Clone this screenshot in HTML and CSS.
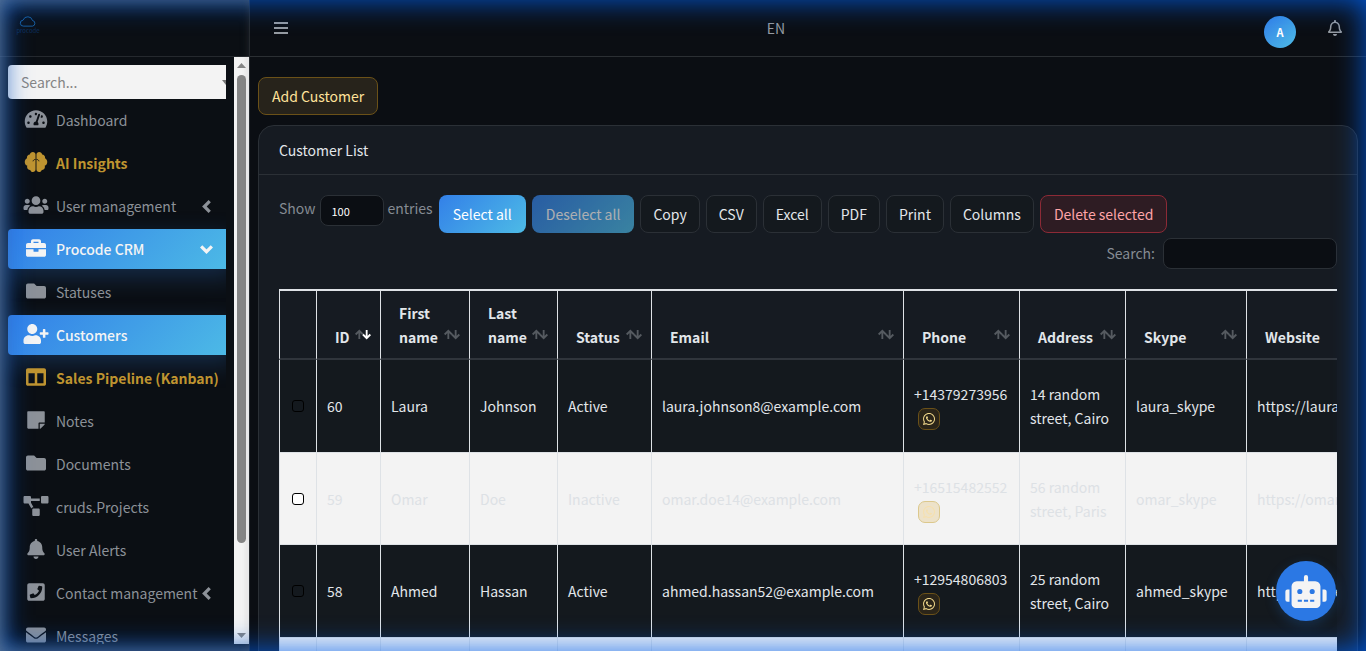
FILE: index.html
```
<!DOCTYPE html>
<html lang="en">
<head>
  <meta charset="utf-8">
  <title>Customer List</title>
  <link rel="stylesheet" href="styles.css">
</head>
<body>
<!-- icon sprite -->
<svg class="sprite">
  <symbol id="i-dash" viewBox="0 0 576 512"><path d="M288 32C128.94 32 0 160.94 0 320c0 52.8 14.25 102.26 39.06 144.8 5.61 9.62 16.3 15.2 27.44 15.2h443c11.14 0 21.83-5.58 27.44-15.2C561.75 422.26 576 372.8 576 320c0-159.06-128.94-288-288-288zm0 64c14.71 0 26.58 10.13 30.32 23.65-1.11 2.26-2.64 4.23-3.45 6.67l-9.22 27.67c-5.13 3.49-10.97 6.01-17.64 6.01-17.67 0-32-14.33-32-32S270.33 96 288 96zM96 384c-17.67 0-32-14.33-32-32s14.33-32 32-32 32 14.33 32 32-14.33 32-32 32zm48-160c-17.67 0-32-14.33-32-32s14.33-32 32-32 32 14.33 32 32-14.33 32-32 32zm246.77-72.41l-61.33 184C343.13 347.33 352 364.54 352 384c0 11.72-3.38 22.55-8.88 32H232.88c-5.5-9.45-8.88-20.28-8.88-32 0-33.94 26.5-61.43 59.9-63.59l61.34-184.01c4.17-12.56 17.73-19.45 30.36-15.17 12.57 4.19 19.35 17.79 15.17 30.36zm14.66 57.2l15.52-46.55c3.47-1.29 7.13-2.23 11.05-2.23 17.67 0 32 14.33 32 32s-14.33 32-32 32c-11.38-.01-20.89-6.28-26.57-15.22zM480 384c-17.67 0-32-14.33-32-32s14.33-32 32-32 32 14.33 32 32-14.33 32-32 32z"/></symbol>
  <symbol id="i-brain" viewBox="0 0 576 512"><path d="M208 0c38 0 68 26 68 62v388c0 34-28 62-66 62-36 0-62-22-70-54-46 2-80-32-80-76 0-10 2-20 6-28C26 340 0 302 0 256c0-42 24-78 60-94-2-8-4-14-4-22 0-40 32-72 74-76C136 26 168 0 208 0zM368 0c-38 0-68 26-68 62v388c0 34 28 62 66 62 36 0 62-22 70-54 46 2 80-32 80-76 0-10-2-20-6-28 40-14 66-52 66-98 0-42-24-78-60-94 2-8 4-14 4-22 0-40-32-72-74-76C440 26 408 0 368 0z"/><path class="cut" d="M276 190c-34 0-58 18-64 48M300 190c34 0 58 18 64 48"/></symbol>
  <symbol id="i-users" viewBox="0 0 640 512"><path d="M96 224c35.3 0 64-28.7 64-64s-28.7-64-64-64-64 28.7-64 64 28.7 64 64 64zm448 0c35.3 0 64-28.7 64-64s-28.7-64-64-64-64 28.7-64 64 28.7 64 64 64zm32 32h-64c-17.6 0-33.5 7.1-45.1 18.6 40.3 22.1 68.9 62 75.1 109.4h66c17.7 0 32-14.3 32-32v-32c0-35.3-28.7-64-64-64zm-256 0c61.9 0 112-50.1 112-112S381.9 32 320 32 208 82.1 208 144s50.1 112 112 112zm76.8 32h-8.3c-20.8 10-43.9 16-68.5 16s-47.6-6-68.5-16h-8.3C179.6 288 128 339.6 128 403.2V432c0 26.5 21.5 48 48 48h288c26.5 0 48-21.5 48-48v-28.8c0-63.6-51.6-115.2-115.2-115.2zm-223.7-13.4C161.5 263.1 145.6 256 128 256H64c-35.3 0-64 28.7-64 64v32c0 17.7 14.3 32 32 32h65.9c6.3-47.4 34.9-87.3 75.2-109.4z"/></symbol>
  <symbol id="i-case" viewBox="0 0 512 512"><path d="M320 336c0 8.84-7.16 16-16 16h-96c-8.84 0-16-7.16-16-16v-48H0v144c0 25.6 22.4 48 48 48h416c25.6 0 48-22.4 48-48V288H320v48zm144-208h-80V80c0-25.6-22.4-48-48-48H176c-25.6 0-48 22.4-48 48v48H48c-25.6 0-48 22.4-48 48v80h512v-80c0-25.6-22.4-48-48-48zm-144 0H192V96h128v32z"/></symbol>
  <symbol id="i-folder" viewBox="0 0 512 512"><path d="M464 128H272l-64-64H48C21.49 64 0 85.49 0 112v288c0 26.51 21.49 48 48 48h416c26.51 0 48-21.49 48-48V176c0-26.51-21.49-48-48-48z"/></symbol>
  <symbol id="i-user-plus" viewBox="0 0 640 512"><path d="M624 208h-64v-64c0-8.8-7.2-16-16-16h-32c-8.8 0-16 7.2-16 16v64h-64c-8.8 0-16 7.2-16 16v32c0 8.8 7.2 16 16 16h64v64c0 8.8 7.2 16 16 16h32c8.8 0 16-7.2 16-16v-64h64c8.8 0 16-7.2 16-16v-32c0-8.8-7.2-16-16-16zm-400 48c70.7 0 128-57.3 128-128S294.7 0 224 0 96 57.3 96 128s57.3 128 128 128zm89.6 32h-16.7c-22.2 10.2-46.9 16-72.9 16s-50.6-5.8-72.9-16h-16.7C60.2 288 0 348.2 0 422.4V464c0 26.5 21.5 48 48 48h352c26.5 0 48-21.5 48-48v-41.6c0-74.2-60.2-134.4-134.4-134.4z"/></symbol>
  <symbol id="i-columns" viewBox="0 0 512 512"><path d="M464 32H48C21.49 32 0 53.49 0 80v352c0 26.51 21.49 48 48 48h416c26.51 0 48-21.49 48-48V80c0-26.51-21.49-48-48-48zM224 416H64V160h160v256zm224 0H288V160h160v256z"/></symbol>
  <symbol id="i-note" viewBox="0 0 448 512"><path d="M312 320h136V56c0-13.3-10.7-24-24-24H24C10.7 32 0 42.7 0 56v400c0 13.3 10.7 24 24 24h264V344c0-13.2 10.8-24 24-24zm129 55l-98 98c-4.5 4.5-10.6 7-17 7h-6V352h128v6.1c0 6.3-2.5 12.4-7 16.9z"/></symbol>
  <symbol id="i-diagram" viewBox="0 0 640 512"><path d="M384 320H256c-17.67 0-32 14.33-32 32v128c0 17.67 14.33 32 32 32h128c17.67 0 32-14.33 32-32V352c0-17.67-14.33-32-32-32zM192 32c0-17.67-14.33-32-32-32H32C14.33 0 0 14.33 0 32v128c0 17.67 14.33 32 32 32h95.72l73.16 128.04C211.98 300.98 232.4 288 256 288h.28L192 175.51V128h224V64H192V32zM608 0H480c-17.67 0-32 14.33-32 32v128c0 17.67 14.33 32 32 32h128c17.67 0 32-14.33 32-32V32c0-17.67-14.33-32-32-32z"/></symbol>
  <symbol id="i-bell" viewBox="0 0 448 512"><path d="M224 512c35.32 0 63.97-28.65 63.97-64H160.03c0 35.35 28.65 64 63.97 64zm215.39-149.71c-19.32-20.76-55.47-51.99-55.47-154.29 0-77.7-54.48-139.9-127.94-155.16V32c0-17.67-14.32-32-31.98-32s-31.98 14.33-31.98 32v20.84C118.56 68.1 64.08 130.3 64.08 208c0 102.3-36.15 133.53-55.47 154.29-6 6.45-8.66 14.16-8.61 21.71.11 16.4 12.98 32 32.1 32h383.8c19.12 0 32-15.6 32.1-32 .05-7.55-2.61-15.27-8.61-21.71z"/></symbol>
  <symbol id="i-bell-o" viewBox="0 0 448 512"><path d="M439.39 362.29c-19.32-20.76-55.47-51.99-55.47-154.29 0-77.7-54.48-139.9-127.94-155.16V32c0-17.67-14.32-32-31.98-32s-31.98 14.33-31.98 32v20.84C118.56 68.1 64.08 130.3 64.08 208c0 102.3-36.15 133.53-55.47 154.29-6 6.45-8.66 14.16-8.61 21.71.11 16.4 12.98 32 32.1 32h383.8c19.12 0 32-15.6 32.1-32 .05-7.55-2.61-15.27-8.61-21.71zM67.53 368c21.22-27.97 44.42-74.33 44.53-159.42 0-.2-.06-.38-.06-.58 0-61.86 50.14-112 112-112s112 50.14 112 112c0 .2-.06.38-.06.58.11 85.1 23.31 131.46 44.53 159.42H67.53zM224 512c35.32 0 63.97-28.65 63.97-64H160.03c0 35.35 28.65 64 63.97 64z"/></symbol>
  <symbol id="i-phone" viewBox="0 0 448 512"><path d="M400 32H48C21.49 32 0 53.49 0 80v352c0 26.51 21.49 48 48 48h352c26.51 0 48-21.49 48-48V80c0-26.51-21.49-48-48-48zM94 416c-7.033 0-13.057-4.873-14.616-11.627l-14.998-65a15 15 0 0 1 8.707-17.16l69.998-29.999a15 15 0 0 1 17.518 4.289l30.997 37.885c48.944-22.963 88.297-62.858 110.781-110.78l-37.886-30.997a15.001 15.001 0 0 1-4.289-17.518l30-69.998a15 15 0 0 1 17.16-8.707l65 14.998A14.997 14.997 0 0 1 384 126c0 160.292-129.945 290-290 290z"/></symbol>
  <symbol id="i-mail" viewBox="0 0 512 512"><path d="M502.3 190.8c3.9-3.1 9.7-.2 9.7 4.7V400c0 26.5-21.5 48-48 48H48c-26.5 0-48-21.5-48-48V195.6c0-5 5.7-7.8 9.7-4.7 22.4 17.4 52.1 39.5 154.1 113.6 21.1 15.4 56.7 47.8 92.2 47.6 35.7.3 72-32.8 92.3-47.6 102-74.1 131.6-96.3 154-113.7zM256 320c23.2.4 56.6-29.2 73.4-41.4 132.7-96.3 142.8-104.7 173.4-128.7 5.8-4.5 9.2-11.5 9.2-18.9v-19c0-26.5-21.5-48-48-48H48c-26.5 0-48 21.5-48 48v19c0 7.4 3.4 14.3 9.2 18.9 30.6 23.9 40.7 32.4 173.4 128.7 16.8 12.2 50.2 41.8 73.4 41.4z"/></symbol>
  <symbol id="i-robot" viewBox="0 0 640 512"><path d="M32,224H64V416H32A32,32,0,0,1,0,384V256A32,32,0,0,1,32,224Zm512-48V448a64,64,0,0,1-64,64H160a64,64,0,0,1-64-64V176a80,80,0,0,1,80-80H288V32a32,32,0,0,1,64,0V96H464A80,80,0,0,1,544,176ZM264,256a40,40,0,1,0-40,40A40,40,0,0,0,264,256Zm-8,128H192v32h64Zm96,0H288v32h64ZM456,256a40,40,0,1,0-40,40A40,40,0,0,0,456,256Zm-8,128H384v32h64ZM640,256V384a32,32,0,0,1-32,32H576V224h32A32,32,0,0,1,640,256Z"/></symbol>
  <symbol id="i-whatsapp" viewBox="0 0 448 512"><path d="M380.9 97.1C339 55.1 283.2 32 223.9 32c-122.4 0-222 99.6-222 222 0 39.1 10.2 77.3 29.6 111L0 480l117.7-30.9c32.4 17.7 68.9 27 106.1 27h.1c122.3 0 224.1-99.6 224.1-222 0-59.3-25.2-115-67.1-157zm-157 341.6c-33.2 0-65.7-8.9-94-25.7l-6.7-4-69.8 18.3L72 359.2l-4.4-7c-18.5-29.4-28.2-63.3-28.2-98.2 0-101.7 82.8-184.5 184.6-184.5 49.3 0 95.6 19.2 130.4 54.1 34.8 34.9 56.2 81.2 56.1 130.5 0 101.8-84.9 184.6-186.6 184.6zm101.2-138.2c-5.5-2.8-32.8-16.2-37.9-18-5.1-1.9-8.8-2.8-12.5 2.8-3.7 5.6-14.3 18-17.6 21.8-3.2 3.7-6.5 4.2-12 1.4-32.6-16.3-54-29.1-75.5-66-5.7-9.8 5.7-9.1 16.3-30.3 1.8-3.7.9-6.9-.5-9.7-1.4-2.8-12.5-30.1-17.1-41.2-4.5-10.8-9.1-9.3-12.5-9.5-3.2-.2-6.9-.2-10.6-.2-3.7 0-9.7 1.4-14.8 6.9-5.1 5.6-19.4 19-19.4 46.3 0 27.3 19.9 53.7 22.6 57.4 2.8 3.7 39.1 59.7 94.8 83.8 35.2 15.2 49 16.5 66.6 13.9 10.7-1.6 32.8-13.4 37.4-26.4 4.6-13 4.6-24.1 3.2-26.4-1.3-2.5-5-3.9-10.5-6.6z"/></symbol>
  <symbol id="i-bars" viewBox="0 0 14 12"><path d="M0 0h14v2H0zM0 5h14v2H0zM0 10h14v2H0z"/></symbol>
  <symbol id="i-left" viewBox="0 0 10 14"><path class="line" d="M8 2L3 7l5 5"/></symbol>
  <symbol id="i-down" viewBox="0 0 14 10"><path class="line" d="M2 2l5 5 5-5"/></symbol>
  <symbol id="i-sort" viewBox="0 0 18 12"><path class="up" d="M5 11V2M1 6l4-4 4 4"/><path class="down" d="M13 1v9M9 6l4 4 4-4"/></symbol>
</svg>

<div class="wrapper">
  <aside class="sidebar">
    <a class="brand" href="#">
      <svg viewBox="0 0 24 16"><path d="M6 13.500a4 4 0 0 1-.5-8A6.500 6.500 0 0 1 18 6a3.800 3.800 0 0 1 0 7.500z"/></svg>
      <span>procode</span>
    </a>
    <div class="side-scroll">
      <nav class="side-nav">
        <div class="side-search">
          <input type="text" placeholder="Search..." aria-label="Search menu">
          <svg viewBox="0 0 8 5"><path d="M0 0h8L4 5z"/></svg>
        </div>
        <a class="nav-item" href="#"><svg><use href="#i-dash"/></svg><span>Dashboard</span></a>
        <a class="nav-item gold" href="#"><svg><use href="#i-brain"/></svg><span>AI Insights</span></a>
        <a class="nav-item" href="#"><svg><use href="#i-users"/></svg><span>User management</span><svg class="caret"><use href="#i-left"/></svg></a>
        <a class="nav-item active" href="#"><svg><use href="#i-case"/></svg><span>Procode CRM</span><svg class="caret"><use href="#i-down"/></svg></a>
        <a class="nav-item" href="#"><svg><use href="#i-folder"/></svg><span>Statuses</span></a>
        <a class="nav-item active" href="#"><svg><use href="#i-user-plus"/></svg><span>Customers</span></a>
        <a class="nav-item gold" href="#"><svg><use href="#i-columns"/></svg><span>Sales Pipeline (Kanban)</span></a>
        <a class="nav-item" href="#"><svg><use href="#i-note"/></svg><span>Notes</span></a>
        <a class="nav-item" href="#"><svg><use href="#i-folder"/></svg><span>Documents</span></a>
        <a class="nav-item" href="#"><svg><use href="#i-diagram"/></svg><span>cruds.Projects</span></a>
        <a class="nav-item" href="#"><svg><use href="#i-bell"/></svg><span>User Alerts</span></a>
        <a class="nav-item" href="#"><svg><use href="#i-phone"/></svg><span>Contact management</span><svg class="caret"><use href="#i-left"/></svg></a>
        <a class="nav-item" href="#"><svg><use href="#i-mail"/></svg><span>Messages</span></a>
      </nav>
      <div class="scrollbar">
        <svg viewBox="0 0 9 5"><path d="M0 5h9L4.500 0z"/></svg>
        <div class="track"><div class="thumb"></div></div>
        <svg viewBox="0 0 9 5"><path d="M0 0h9L4.500 5z"/></svg>
      </div>
    </div>
  </aside>

  <div class="main">
    <header class="topbar">
      <button class="icon-btn" type="button" aria-label="Toggle menu"><svg class="bars"><use href="#i-bars"/></svg></button>
      <a class="lang" href="#">EN</a>
      <div class="top-right">
        <a class="avatar" href="#">A</a>
        <button class="icon-btn" type="button" aria-label="Alerts"><svg class="bell"><use href="#i-bell-o"/></svg></button>
      </div>
    </header>

    <main class="content">
      <button class="btn btn-gold" type="button">Add Customer</button>

      <section class="card">
        <h1 class="card-header">Customer List</h1>
        <div class="card-body">
          <div class="toolbar">
            <label class="length">Show
              <select><option>100</option></select>
              entries</label>
            <button class="btn btn-primary" type="button">Select all</button>
            <button class="btn btn-primary" type="button" disabled>Deselect all</button>
            <button class="btn" type="button">Copy</button>
            <button class="btn" type="button">CSV</button>
            <button class="btn" type="button">Excel</button>
            <button class="btn" type="button">PDF</button>
            <button class="btn" type="button">Print</button>
            <button class="btn" type="button">Columns</button>
            <button class="btn btn-danger" type="button">Delete selected</button>
          </div>
          <div class="filter">
            <label for="q">Search:</label>
            <input id="q" type="search">
          </div>

          <div class="table-wrap">
            <table>
              <colgroup>
                <col class="c-check"><col class="c-id"><col class="c-first"><col class="c-last"><col class="c-status">
                <col class="c-email"><col class="c-phone"><col class="c-addr"><col class="c-skype"><col class="c-web">
              </colgroup>
              <thead>
                <tr>
                  <th></th>
                  <th class="desc"><div>ID<svg><use href="#i-sort"/></svg></div></th>
                  <th><div>First name<svg><use href="#i-sort"/></svg></div></th>
                  <th><div>Last name<svg><use href="#i-sort"/></svg></div></th>
                  <th><div>Status<svg><use href="#i-sort"/></svg></div></th>
                  <th><div>Email<svg><use href="#i-sort"/></svg></div></th>
                  <th><div>Phone<svg><use href="#i-sort"/></svg></div></th>
                  <th><div>Address<svg><use href="#i-sort"/></svg></div></th>
                  <th><div>Skype<svg><use href="#i-sort"/></svg></div></th>
                  <th><div>Website<svg><use href="#i-sort"/></svg></div></th>
                </tr>
              </thead>
              <tbody>
                <tr>
                  <td class="check"><input type="checkbox" aria-label="Select 60"></td>
                  <td>60</td><td>Laura</td><td>Johnson</td><td>Active</td>
                  <td>laura.johnson8@example.com</td>
                  <td>+14379273956 <a class="wa" href="#"><svg><use href="#i-whatsapp"/></svg></a></td>
                  <td>14 random street, Cairo</td><td>laura_skype</td><td>https://laura.example.com</td>
                </tr>
                <tr class="light">
                  <td class="check"><input type="checkbox" aria-label="Select 59"></td>
                  <td>59</td><td>Omar</td><td>Doe</td><td>Inactive</td>
                  <td>omar.doe14@example.com</td>
                  <td>+16515482552 <a class="wa" href="#"><svg><use href="#i-whatsapp"/></svg></a></td>
                  <td>56 random street, Paris</td><td>omar_skype</td><td>https://omar.example.com</td>
                </tr>
                <tr>
                  <td class="check"><input type="checkbox" aria-label="Select 58"></td>
                  <td>58</td><td>Ahmed</td><td>Hassan</td><td>Active</td>
                  <td>ahmed.hassan52@example.com</td>
                  <td>+12954806803 <a class="wa" href="#"><svg><use href="#i-whatsapp"/></svg></a></td>
                  <td>25 random street, Cairo</td><td>ahmed_skype</td><td>https://ahmed.example.com</td>
                </tr>
                <tr class="light">
                  <td></td><td></td><td></td><td></td><td></td><td></td><td></td><td></td><td></td><td></td>
                </tr>
              </tbody>
            </table>
          </div>
        </div>
      </section>
    </main>
  </div>
</div>

<button class="chat" type="button" aria-label="Assistant"><svg><use href="#i-robot"/></svg></button>
</body>
</html>
```
FILE: styles.css
```
* {
  box-sizing: border-box;
}
body {
  margin: 0;
  height: 100vh;
  overflow: hidden;
  background: #0b0e13;
  color: #e2e6ea;
  /* the CJK family carries the Source Sans latin shapes */
  font-family: "Noto Sans CJK SC", "Source Sans Pro", sans-serif;
  font-size: 14px;
  line-height: 24px;
}
/* blue glow round the window */
body::after {
  content: "";
  position: fixed;
  inset: 0;
  pointer-events: none;
  box-shadow: inset 0 0 30px rgba(0, 98, 240, .9);
}
a {
  color: inherit;
  text-decoration: none;
}
button, input, select {
  font: inherit;
  color: inherit;
}
svg {
  fill: currentColor;
  flex: none;
}
.sprite {
  position: absolute;
  width: 0;
  height: 0;
}
.line {
  fill: none;
  stroke: currentColor;
  stroke-width: 3;
}
.cut {
  fill: none;
  stroke: #0b0e13;
  stroke-width: 22;
}
.wrapper {
  display: flex;
  height: 100vh;
}

/* sidebar */
.sidebar {
  position: relative;
  display: flex;
  flex-direction: column;
  width: 250px;
  flex: none;
  padding-bottom: 7px;
  background: #0b0f14;
  border-right: 1px solid #25292e;
}
/* softens the glow over the menu, has to sit above it */
.sidebar::after {
  content: "";
  position: absolute;
  inset: 0;
  z-index: 1;
  pointer-events: none;
  box-shadow: inset 12px 0 16px -8px rgba(120, 130, 135, .5), inset 0 12px 16px -8px rgba(120, 130, 135, .4), inset 0 -12px 16px -8px rgba(120, 130, 135, .4);
}
.brand {
  display: flex;
  flex-direction: column;
  align-items: center;
  width: 56px;
  height: 57px;
  flex: none;
  padding-top: 16px;
  color: #0c2f5c;
  font-size: 6px;
  line-height: 6px;
}
.brand svg {
  width: 18px;
  height: 12px;
  fill: none;
  stroke: #1e78c8;
  stroke-width: 1;
}
.side-scroll {
  display: flex;
  flex: 1;
  min-height: 0;
  border-top: 1px solid #25292e;
  margin-top: -1px;
}
.side-nav {
  flex: 1;
  display: flex;
  flex-direction: column;
  gap: 3px;
  overflow: hidden;
  padding: 8px 0 0 8px;
  margin-right: 8px;
}
.side-search {
  display: flex;
  align-items: center;
  height: 34px;
  flex: none;
  margin: 0 -8px -2px 0;
  background: #f3f3f3;
  border-radius: 4px;
  color: #777;
}
.side-search input {
  flex: 1;
  min-width: 0;
  padding: 0 13px;
  border: 0;
  background: none;
}
.side-search input::placeholder {
  color: #858585;
}
.side-search svg {
  width: 8px;
  height: 5px;
  margin-right: 4px;
}
.nav-item {
  display: flex;
  align-items: center;
  height: 40px;
  flex: none;
  margin-right: -8px;
  padding: 0 20px 0 15px;
  border-radius: 4px;
  color: #8c9198;
  white-space: nowrap;
}
.nav-item svg {
  width: 26px;
  height: 20px;
  margin: 0 7px 3px 0;
}
.nav-item svg.caret {
  width: 15px;
  height: 15px;
  margin: 0 0 0 auto;
}
.nav-item.gold {
  color: #bf9430;
  font-weight: 700;
}
.nav-item.active {
  color: #f4f4f4;
  font-weight: 500;
  background: linear-gradient(135deg, #3380e8, #4dbbe6);
  box-shadow: 0 8px 24px rgba(50, 130, 235, .25);
}
.scrollbar {
  display: flex;
  flex-direction: column;
  align-items: center;
  width: 15px;
  padding: 6px 0;
  background: #f3f3f3;
  color: #858585;
}
.scrollbar svg {
  width: 9px;
  height: 5px;
}
.track {
  flex: 1;
  width: 9px;
  padding: 7px 0;
}
.thumb {
  height: 85%;
  border-radius: 5px;
  background: #858585;
}

/* top bar */
.main {
  flex: 1;
  min-width: 0;
  overflow: hidden;
}
.topbar {
  display: flex;
  align-items: center;
  justify-content: space-between;
  height: 57px;
  padding: 0 23px 0 24px;
  border-bottom: 1px solid #2b2f33;
  color: #969ba1;
}
.icon-btn {
  display: flex;
  padding: 0;
  border: 0;
  background: none;
}
.bars {
  width: 14px;
  height: 12px;
}
.bell {
  width: 16px;
  height: 16px;
}
.top-right {
  display: flex;
  align-items: center;
  gap: 31px;
}
.avatar {
  width: 32px;
  height: 32px;
  margin-top: 7px;
  border-radius: 50%;
  background: linear-gradient(135deg, #3380e8, #4dbbe6);
  color: #fff;
  font-size: 11px;
  font-weight: 700;
  line-height: 32px;
  text-align: center;
}

/* content */
.content {
  padding: 20px 8px 0;
}
.btn {
  height: 38px;
  padding: 0 12px;
  border: 1px solid #2b3036;
  border-radius: 8px;
  background: #14191e;
  color: #e2e6ea;
  font-weight: 400;
  line-height: 24px;
  white-space: nowrap;
}
.btn-gold {
  padding: 0 13px;
  background: #27231b;
  border-color: #6b5118;
  color: #ffe29a;
}
.btn-primary {
  border: 0;
  padding: 0 14px;
  background: linear-gradient(135deg, #3380e8, #4dbbe6);
  color: #fff;
}
.btn-primary:disabled {
  opacity: .65;
}
.btn-danger {
  padding: 0 13px;
  background: #2e1c23;
  border-color: #8c2a36;
  color: #ffa4a8;
}
.card {
  margin-top: 10px;
  border: 1px solid #2b3036;
  border-radius: 16px;
  background: #161b22;
}
.card-header {
  margin: 0;
  padding: 12px 20px;
  height: 49px;
  border-bottom: 1px solid #2b3036;
  font-size: 14px;
  font-weight: 400;
}
.card-body {
  padding: 20px 20px 0;
}
.toolbar {
  display: flex;
  flex-wrap: wrap;
  gap: 6px;
}
.length {
  display: flex;
  gap: 4px;
  height: 31px;
  line-height: 26px;
  color: #858b93;
}
.length select {
  width: 64px;
  height: 31px;
  appearance: none;
  padding: 0 11px;
  border: 1px solid #2b3036;
  border-radius: 8px;
  background: #0b0e13;
  color: #fff;
  font-size: 11px;
}
.filter {
  display: flex;
  justify-content: flex-end;
  gap: 8px;
  margin-top: 5px;
  line-height: 31px;
  color: #858b93;
}
.filter input {
  width: 174px;
  height: 31px;
  border: 1px solid #2b3036;
  border-radius: 8px;
  background: #0b0e13;
}

/* table */
.table-wrap {
  margin-top: 20px;
  overflow: hidden;
}
table {
  width: 1117px;
  table-layout: fixed;
  border-collapse: separate;
  border-spacing: 0;
  background: #14191e;
}
.c-check { width: 37px; }
.c-id { width: 64px; }
.c-first { width: 89px; }
.c-last { width: 88px; }
.c-status { width: 94px; }
.c-email { width: 252px; }
.c-phone { width: 116px; }
.c-addr { width: 106px; }
.c-skype { width: 121px; }
.c-web { width: 150px; }
th {
  height: 71px;
  padding: 10px 8px 9px 18px;
  border-left: 1px solid #dee2e6;
  border-top: 2px solid #dee2e6;
  border-bottom: 2px solid #30353c;
  background: #161b22;
  text-align: left;
  vertical-align: bottom;
}
th div {
  display: flex;
  align-items: flex-end;
  justify-content: space-between;
}
th svg {
  width: 18px;
  height: 11px;
  margin-bottom: 9px;
}
.up, .down {
  fill: none;
  stroke: #555a60;
  stroke-width: 2;
}
.down {
  stroke: var(--down, #555a60);
}
.desc svg {
  --down: #fff;
}
td {
  height: 92px;
  padding: 0 0 0 10px;
  border-left: 1px solid #dee2e6;
}
td.check {
  padding: 0 1px 0 0;
}
td input {
  display: block;
  appearance: none;
  width: 12px;
  height: 12px;
  margin: 0 auto;
  border: 1px solid #000;
  border-radius: 3px;
}
.light td {
  height: 93px;
  background: #f3f3f3;
  color: #dde1e5;
  border-top: 1px solid #dee2e6;
  border-bottom: 1px solid #dee2e6;
}
.light td input {
  background: #fff;
}
.wa {
  display: flex;
  align-items: center;
  justify-content: center;
  width: 22px;
  height: 22px;
  margin: 2px 0 0 4px;
  border: 1px solid #6b5118;
  border-radius: 7px;
  background: #2b2519;
  color: #f2d98c;
}
.wa svg {
  width: 12px;
  height: 14px;
}
.light .wa {
  border-color: #dcc88c;
  background: #ede2c9;
  color: #f6e0ae;
}

/* floating assistant button */
.chat {
  position: fixed;
  right: 30px;
  bottom: 30px;
  z-index: 2;
  display: flex;
  align-items: center;
  justify-content: center;
  width: 60px;
  height: 60px;
  padding: 0;
  border: 0;
  border-radius: 50%;
  background: #2b78e4;
  color: #f4f4f4;
  box-shadow: 0 4px 12px rgba(30, 100, 180, .3);
}
.chat svg {
  width: 42px;
  height: 33px;
}
```
